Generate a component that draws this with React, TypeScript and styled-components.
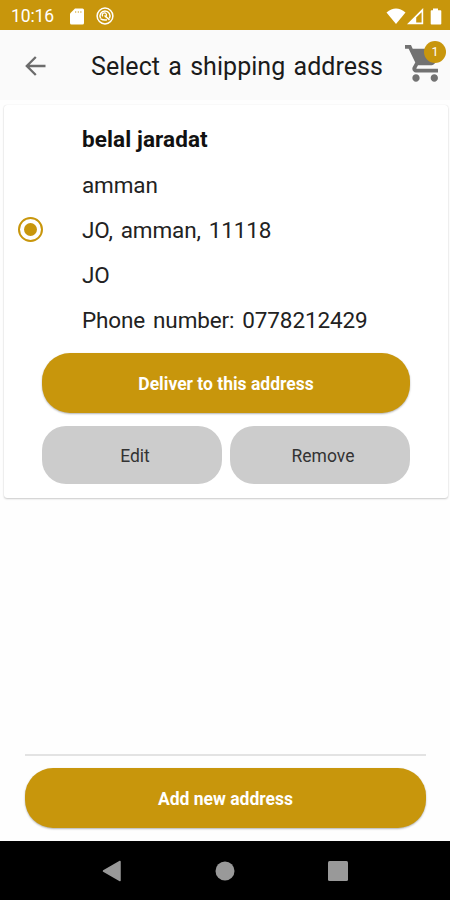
import React from "react";
import styled, { createGlobalStyle } from "styled-components";

const gold = "#c8960c";

const GlobalStyle = createGlobalStyle`
  * { box-sizing: border-box; }
  body { margin: 0; background: #fff; }
`;

const Screen = styled.div`
  width: 450px;
  height: 900px;
  display: flex;
  flex-direction: column;
  overflow: hidden;
  background: #fefefe;
  font-family: Roboto, "Liberation Sans", sans-serif;
  color: #1b1b1b;
`;

const StatusBar = styled.header`
  height: 30px;
  flex: none;
  display: flex;
  align-items: center;
  padding: 2px 6px 0 11px;
  background: ${gold};
  color: #fff;
  svg { display: block; }
`;

const Clock = styled.span`
  width: 59px;
  font-size: 17.5px;
  line-height: 28px;
  letter-spacing: -0.1px;
`;

const StatusIcons = styled.div<{ $gap: number; $end?: boolean }>`
  display: flex;
  align-items: center;
  gap: ${(p) => p.$gap}px;
  margin-left: ${(p) => (p.$end ? "auto" : "0")};
`;

const AppBar = styled.div`
  height: 70px;
  flex: none;
  display: flex;
  align-items: center;
  background: #fafafa;
  padding: 0 8px 0 25px;
`;

const IconButton = styled.button`
  border: 0;
  padding: 1px 0 0;
  background: none;
  display: block;
  svg { display: block; }
`;

const Title = styled.h1`
  flex: 1;
  margin: 3px 0 0 45px;
  font-size: 25px;
  line-height: 32px;
  font-weight: 400;
  letter-spacing: 0.05px;
  word-spacing: 2px;
  white-space: nowrap;
`;

const CartButton = styled(IconButton)`
  position: relative;
  width: 37px;
  height: 40px;
  margin-bottom: 4px;
`;

const Badge = styled.span`
  position: absolute;
  top: -2px;
  right: -4px;
  width: 22px;
  height: 22px;
  border-radius: 50%;
  background: ${gold};
  color: #fff;
  font: 12.5px/22px Roboto, sans-serif;
  text-align: center;
`;

const Content = styled.main`
  flex: 1;
  display: flex;
  flex-direction: column;
  padding: 5px 2px 0 4px;
`;

const Card = styled.section`
  height: 393px;
  border-radius: 3px;
  background: #fff;
  box-shadow: 0 1px 2px rgba(0, 0, 0, 0.2), 0 0 1px rgba(0, 0, 0, 0.12);
  padding: 6px 38px 0 14px;
`;

const AddressOption = styled.label`
  display: flex;
  align-items: center;
  height: 242px;
  padding-bottom: 5px;
`;

const Radio = styled.span`
  width: 25px;
  height: 25px;
  flex: none;
  margin: 0 39px 0 0;
  border: 2.5px solid ${gold};
  border-radius: 50%;
  display: grid;
  place-items: center;
  &::after {
    content: "";
    width: 13px;
    height: 13px;
    border-radius: 50%;
    background: ${gold};
  }
`;

const AddressLines = styled.div`
  display: flex;
  flex-direction: column;
`;

const Line = styled.div<{ $name?: boolean }>`
  height: ${(p) => (p.$name ? 46 : 45)}px;
  line-height: 45px;
  font-size: 22.5px;
  font-weight: ${(p) => (p.$name ? 700 : 400)};
  color: ${(p) => (p.$name ? "#111" : "#222")};
  letter-spacing: ${(p) => (p.$name ? 0.1 : -0.13)}px;
  word-spacing: ${(p) => (p.$name ? 0 : 2.5)}px;
  white-space: nowrap;
`;

const Actions = styled.div`
  margin-left: 24px;
  display: grid;
  grid-template-columns: 180px 180px;
  gap: 13px 8px;
`;

const PrimaryButton = styled.button`
  grid-column: 1 / -1;
  width: 100%;
  height: 60px;
  border: 0;
  border-radius: 28px;
  background: ${gold};
  box-shadow: 0 1px 2px rgba(0, 0, 0, 0.3);
  color: #fff;
  font: 700 17.5px Roboto, sans-serif;
  padding: 1px 0 0;
`;

const SecondaryButton = styled.button`
  height: 58px;
  border: 0;
  border-radius: 24px;
  background: #ccc;
  color: #333;
  font: 400 17.5px Roboto, sans-serif;
  padding: 2px 0 0 6px;
`;

const Footer = styled.footer`
  margin: auto 22px 13px 21px;
  border-top: 2px solid #e3e3e3;
  padding-top: 12px;
`;

const NavBar = styled.nav`
  height: 59px;
  flex: none;
  display: flex;
  justify-content: center;
  align-items: center;
  gap: 93px;
  background: #000;
`;

export default function App() {
  return (
    <Screen>
      <GlobalStyle />
      <StatusBar>
        <Clock>10:16</Clock>
        <StatusIcons $gap={12}>
          <svg width="14" height="17" viewBox="0 0 14 17">
            <path d="M5 .5h7.5Q14 .5 14 2v13q0 1.5-1.5 1.5h-11Q0 16.500 0 15V5.500Z" fill="#fff" />
            <path d="M5.700 3v2M8.300 3v2M10.900 3v2" stroke={gold} strokeWidth="1" opacity=".6" />
          </svg>
          <svg width="18" height="18" viewBox="0 0 18 18" fill="none" stroke="#fff">
            <circle cx="9" cy="9" r="7.900" strokeWidth="1.500" />
            <path d="M4.600 11.300A5 5 0 1 1 13.400 11.300M4.600 11.800q3 1.700 6.300 1" strokeWidth="1.500" />
            <path d="M6.700 9.300A2.100 2.100 0 1 1 9.300 9.900" strokeWidth="1.300" />
            <path d="m8.500 8.500 5 4.300" strokeWidth="1.600" />
          </svg>
        </StatusIcons>
        <StatusIcons $gap={1} $end>
          <svg width="20" height="17" viewBox="0 0 20 17">
            <path d="M.5 4.500Q10-3.300 19.500 4.500L10 16Z" fill="#fff" />
          </svg>
          <svg width="19" height="17" viewBox="0 0 19 17">
            <path d="M0 16.200 16.200 0V16.200ZM9.200 14.600h5.400V4.200L9.200 9.600Z" fill="#fff" fillRule="evenodd" />
          </svg>
          <svg width="17" height="17" viewBox="0 0 17 17">
            <path d="M6 2.300V.5h5v1.800h2.500q.8 0 .8.800v12.600q0 .8-.8.800h-9q-.8 0-.8-.8V3.100q0-.8.800-.8Z" fill="#fff" />
          </svg>
        </StatusIcons>
      </StatusBar>
      <AppBar>
        <IconButton aria-label="Back">
          <svg width="21" height="20" viewBox="0 0 21 20" fill="none" stroke="#6c6c6c" strokeWidth="2.300">
            <path d="M20.500 10H2.500M10.800 1 1.800 10l9 9" />
          </svg>
        </IconButton>
        <Title>Select a shipping address</Title>
        <CartButton aria-label="Cart">
          <svg width="37" height="37" viewBox="1 2 20.200 20.200" fill="#727272">
            <path d="M7 18c-1.100 0-1.990.9-1.990 2S5.900 22 7 22s2-.9 2-2-.9-2-2-2zM1 2v2h2l3.600 7.590-1.350 2.450c-.16.280-.25.610-.25.960 0 1.100.9 2 2 2h12v-2H7.420c-.14 0-.25-.11-.25-.25l.03-.12.900-1.630h7.450c.75 0 1.410-.41 1.750-1.030l3.580-6.490c.08-.14.120-.31.120-.48 0-.55-.45-1-1-1H5.210l-.94-2H1zm16 16c-1.100 0-1.990.9-1.990 2s.89 2 1.990 2 2-.9 2-2-.9-2-2-2z" />
          </svg>
          <Badge>1</Badge>
        </CartButton>
      </AppBar>
      <Content>
        <Card>
          <AddressOption>
            <Radio role="radio" aria-checked="true" />
            <AddressLines>
              <Line $name>belal jaradat</Line>
              <Line>amman</Line>
              <Line>JO, amman, 11118</Line>
              <Line>JO</Line>
              <Line>Phone number: 0778212429</Line>
            </AddressLines>
          </AddressOption>
          <Actions>
            <PrimaryButton>Deliver to this address</PrimaryButton>
            <SecondaryButton>Edit</SecondaryButton>
            <SecondaryButton>Remove</SecondaryButton>
          </Actions>
        </Card>
        <Footer>
          <PrimaryButton>Add new address</PrimaryButton>
        </Footer>
      </Content>
      <NavBar>
        <svg width="20" height="22" viewBox="0 0 20 22">
          <path d="M18 1.500v19L1.500 11Z" fill="#999" stroke="#999" strokeWidth="1.500" strokeLinejoin="round" />
        </svg>
        <svg width="20" height="20" viewBox="0 0 20 20">
          <circle cx="10" cy="10" r="9.500" fill="#999" />
        </svg>
        <svg width="20" height="20" viewBox="0 0 20 20">
          <rect width="20" height="20" rx="1.500" fill="#999" />
        </svg>
      </NavBar>
    </Screen>
  );
}
